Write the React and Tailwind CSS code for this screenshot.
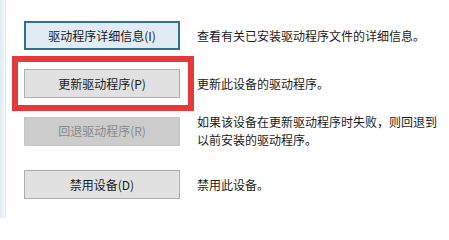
import React from 'react';

const rows = [
  { label: '驱动程序详细信息(I)', desc: ['查看有关已安装驱动程序文件的详细信息。'], variant: 'focused', mt: 'mt-[21px]' },
  { label: '更新驱动程序(P)', desc: ['更新此设备的驱动程序。'], variant: 'normal', mt: 'mt-[19px]', marked: true },
  { label: '回退驱动程序(R)', desc: ['如果该设备在更新驱动程序时失败，则回退到', '以前安装的驱动程序。'], variant: 'disabled', mt: 'mt-[15px]' },
  { label: '禁用设备(D)', desc: ['禁用此设备。'], variant: 'normal', mt: 'mt-[21px]' },
];

const buttonStyles = {
  focused: 'border-2 border-[#2f6f8f] bg-[#e1ebf4] text-[#1a1a1a]',
  normal: 'border border-[#adadad] bg-[#e1e1e1] text-[#1a1a1a]',
  disabled: 'border border-[#c4c4c4] bg-[#cccccc] text-[#8a8a8a]',
};

const App = () => {
  return (
    <div
      className="w-[449px] h-[218px] bg-white flex overflow-hidden"
      style={{ fontFamily: '"Microsoft YaHei", "Noto Sans CJK SC", sans-serif' }}
    >
      {/* window edge */}
      <div className="w-[6px] h-full bg-gradient-to-r from-[#dfeaf3] to-[#f3f8fb] border-r border-[#e6e6e6]" />

      <div className="flex-1 flex flex-col pl-[18px]">
        {rows.map((row) => (
          <div key={row.label} className={`relative flex items-center ${row.mt}`}>
            {row.marked && (
              <div className="absolute left-[-12px] top-[-13px] w-[182px] h-[55px] border-[6px] border-[#e53a3c]" />
            )}
            <div
              className={`w-[156px] h-[29px] shrink-0 flex items-center justify-center text-[12px] ${buttonStyles[row.variant]}`}
            >
              {row.label}
            </div>
            <div className="ml-[17px] text-[12px] leading-[18px] text-[#1a1a1a]">
              {row.desc.map((line) => (
                <div key={line}>{line}</div>
              ))}
            </div>
          </div>
        ))}
      </div>
    </div>
  );
};

export default App;
